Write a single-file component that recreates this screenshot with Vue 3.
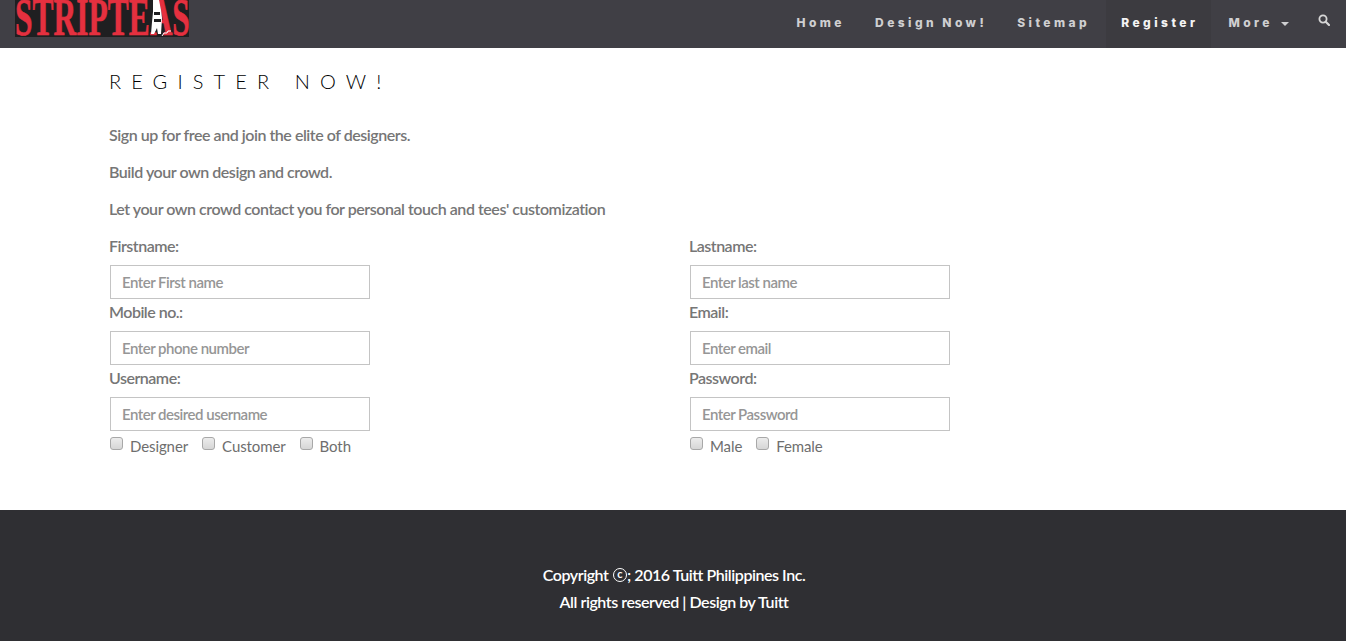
<script setup>
const links = [
  { label: 'Home' },
  { label: 'Design Now!' },
  { label: 'Sitemap' },
  { label: 'Register', active: true },
]
const paragraphs = [
  'Sign up for free and join the elite of designers.',
  'Build your own design and crowd.',
  "Let your own crowd contact you for personal touch and tees' customization",
]
const fields = [
  { label: 'Firstname:', ph: 'Enter First name' },
  { label: 'Lastname:', ph: 'Enter last name' },
  { label: 'Mobile no.:', ph: 'Enter phone number' },
  { label: 'Email:', ph: 'Enter email' },
  { label: 'Username:', ph: 'Enter desired username' },
  { label: 'Password:', ph: 'Enter Password' },
]
const groups = [
  ['Designer', 'Customer', 'Both'],
  ['Male', 'Female'],
]
</script>

<template>
  <div class="page">
    <header class="nav">
      <div class="logo">
        <span class="logo-text">STRIPTEAS</span>
        <svg class="figure" viewBox="0 0 34 37" width="34" height="37">
          <path d="M6 0h6l2 10 1 8-1 16h-3l-1-6-3 6H4l1-12 1-10z" fill="#fff" />
          <path d="M7 12h6v3H7zM7 19h7v3H7z" fill="#1f1f21" />
          <path d="M15 36l2-3h3l1-2h3" fill="none" stroke="#fff" stroke-width="1" />
        </svg>
      </div>
      <nav class="links">
        <a v-for="l in links" :key="l.label" class="link" :class="{ active: l.active }">{{ l.label }}</a>
        <a class="link more">More <span class="caret"></span></a>
        <svg class="search" viewBox="0 0 12 12" width="12" height="12">
          <circle cx="5" cy="5" r="3.6" fill="none" stroke="#d6d6d6" stroke-width="1.8" />
          <path d="M7.7 7.7 11 11" stroke="#d6d6d6" stroke-width="2.2" stroke-linecap="round" />
        </svg>
      </nav>
    </header>

    <main class="main">
      <h1 class="title">REGISTER NOW!</h1>
      <p v-for="p in paragraphs" :key="p" class="para">{{ p }}</p>
      <form class="grid">
        <div v-for="f in fields" :key="f.label" class="field">
          <label class="label">{{ f.label }}</label>
          <input class="input" type="text" :placeholder="f.ph" />
        </div>
        <div v-for="(g, i) in groups" :key="i" class="checks">
          <label v-for="c in g" :key="c" class="check"><input type="checkbox" class="box" /><span>{{ c }}</span></label>
        </div>
      </form>
    </main>

    <footer class="footer">
      <p>Copyright <span class="copy">c</span>; 2016 Tuitt Philippines Inc.</p>
      <p>All rights reserved | Design by Tuitt</p>
    </footer>
  </div>
</template>

<style>
html, body { margin: 0; background: #fff; }
</style>

<style scoped>
.page { font-family: Lato, "Liberation Sans", sans-serif; height: 641px; display: flex; flex-direction: column; overflow: hidden; }
.nav { height: 48px; background: #403f45; display: flex; justify-content: space-between; flex: none; }
.logo { position: relative; margin-left: 15px; width: 174px; height: 37px; background: #1f1f21; overflow: hidden; }
.logo-text { display: block; font-family: "Liberation Serif", serif; font-weight: 700; font-size: 52px; line-height: 37px; color: #e5303f; -webkit-text-stroke: 0.6px #e5303f; transform: scaleX(0.605); transform-origin: left center; white-space: nowrap; margin-top: -1px; }
.figure { position: absolute; left: 132px; top: 0; }
.links { display: flex; align-items: stretch; padding-right: 16px; }
.link { font-family: Inter, sans-serif; font-weight: 800; font-size: 12px; letter-spacing: 3.45px; word-spacing: -1px; color: #cfcfd1; padding: 0 13px 0 15px; margin-right: 2px; line-height: 46px; white-space: nowrap; }
.link.active { background: #3c3b40; color: #f4f4f4; margin-left: 1px; }
.caret { display: inline-block; width: 0; height: 0; border: 4px solid transparent; border-top-color: #cfcfd1; border-bottom: 0; vertical-align: middle; margin-left: 3px; }
.search { margin: 14px 0 0 14px; }
.main { flex: 1; padding: 0 110px; }
.title { margin: 0 0 0 -1px; padding-top: 20px; font-weight: 300; font-size: 20px; line-height: 26px; letter-spacing: 10.1px; color: #000; }
.para { margin: 0 0 13px -1px; font-size: 16px; line-height: 24px; color: #767676; font-weight: 600; letter-spacing: -0.46px; }
.title + .para { margin-top: 29px; }
.grid { display: grid; grid-template-columns: 580px 1fr; margin-top: 14px; }
.field { height: 66px; display: flex; flex-direction: column; }
.label { font-size: 16px; font-weight: 600; line-height: 22px; color: #767676; margin: 0 0 8px -1px; letter-spacing: -0.5px; }
.input { width: 260px; height: 34px; flex: none; box-sizing: border-box; border: 1px solid #c4c4c4; padding: 0 11px; font: 600 15px Lato, sans-serif; letter-spacing: -0.5px; color: #555; background: #fff; outline: none; }
.input::placeholder { color: #969696; opacity: 1; }
.checks { display: flex; gap: 14px; height: 24px; }
.check { display: flex; font-size: 15px; line-height: 26px; letter-spacing: -0.1px; color: #6e6e6e; }
.box { appearance: none; box-sizing: border-box; margin: 4px 7px 0 0; width: 13px; height: 13px; background: linear-gradient(#ececec, #d6d6d6); border: 1px solid #a8a8a8; border-radius: 3px; }
.footer { height: 131px; flex: none; background: #2f2f33; color: #fff; text-align: center; font-size: 16px; font-weight: 600; line-height: 27px; padding: 51px 0 0 2px; box-sizing: border-box; letter-spacing: -0.45px; }
.footer p { margin: 0; }
.copy { display: inline-block; width: 14px; height: 14px; line-height: 9px; border: 1.5px solid #fff; border-radius: 50%; font-size: 11px; font-weight: 700; box-sizing: border-box; vertical-align: -1px; letter-spacing: 0; overflow: hidden; margin-left: 1px; }
</style>
